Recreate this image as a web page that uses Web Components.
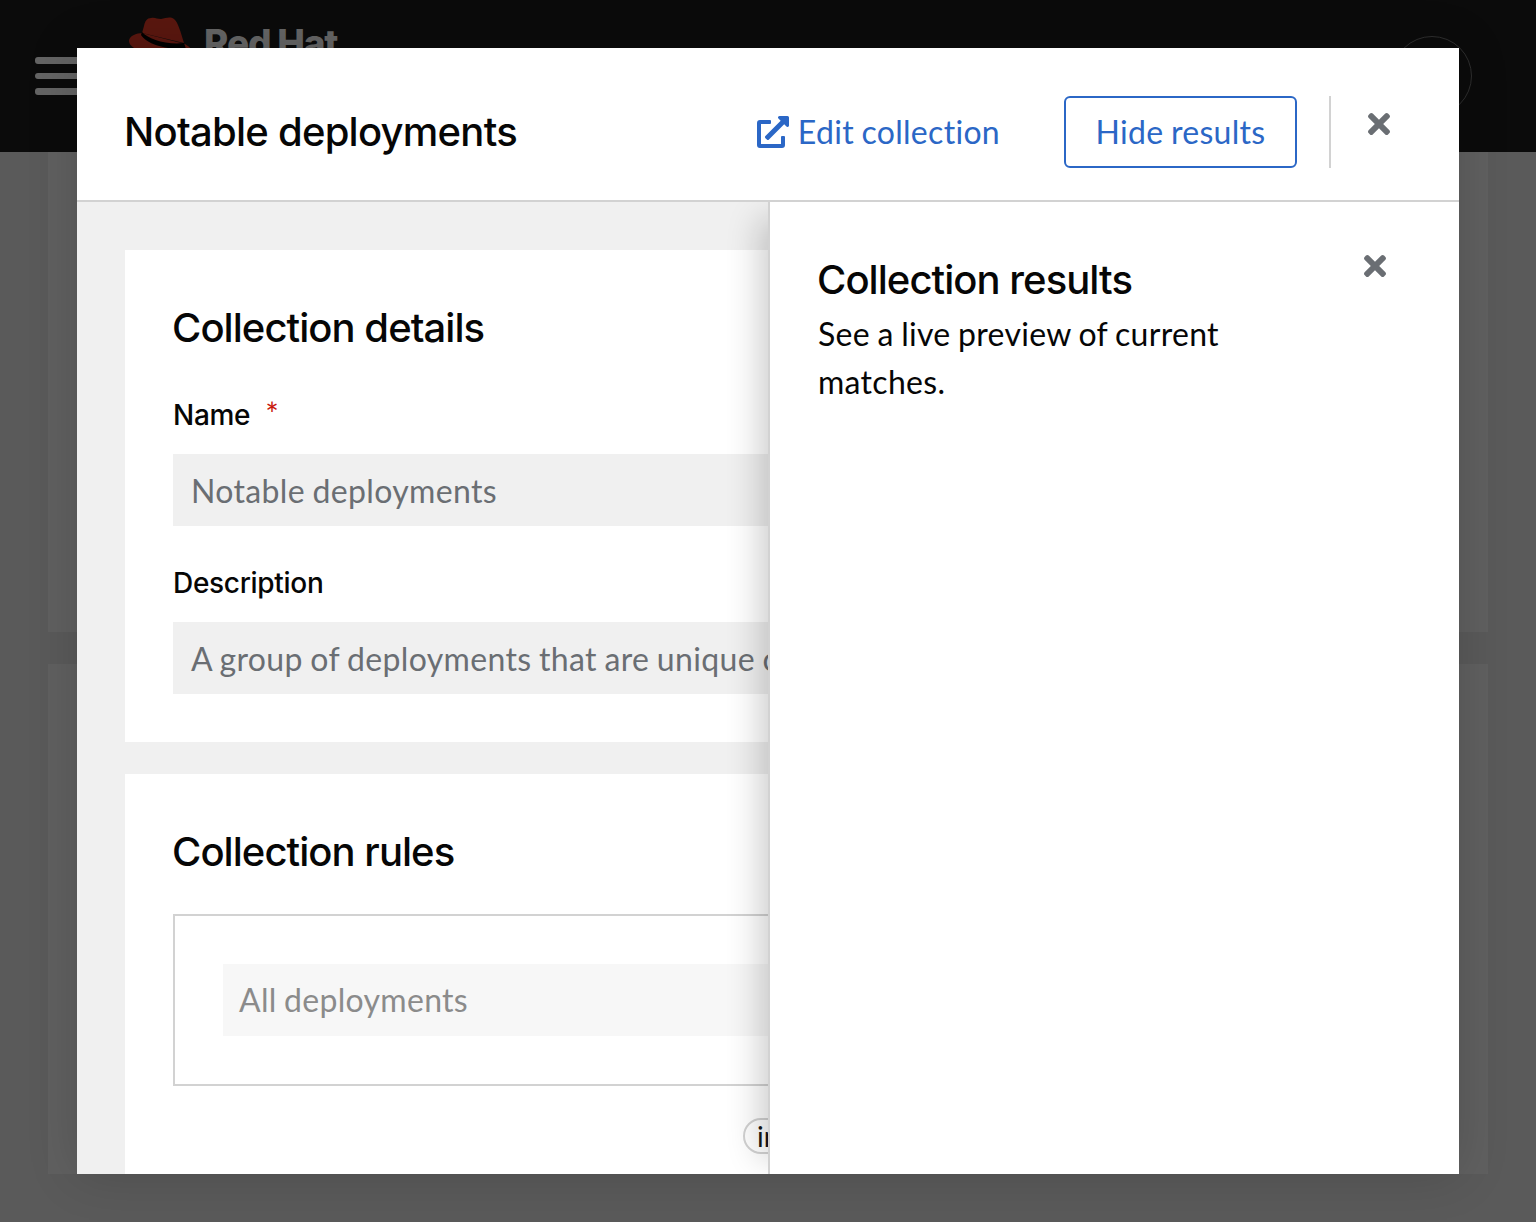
<!DOCTYPE html>
<html lang="en">
<head>
<meta charset="utf-8">
<title>Notable deployments</title>
<style>
  html, body { margin: 0; height: 100%; }
  body { font-family: "Lato", "Liberation Sans", sans-serif; overflow: hidden; }
</style>
</head>
<body>
<app-backdrop>
  <app-masthead></app-masthead>
  <page-block style="height:480px"></page-block>
  <page-block style="height:510px"></page-block>
</app-backdrop>

<collection-modal heading="Notable deployments">
  <edit-link slot="actions">Edit collection</edit-link>
  <outline-button slot="actions">Hide results</outline-button>

  <form-card heading="Collection details">
    <form-field label="Name" required value="Notable deployments"></form-field>
    <form-field label="Description" value="A group of deployments that are unique or notable"></form-field>
  </form-card>
  <form-card heading="Collection rules">
    <rule-box>All deployments</rule-box>
    <rule-pill>in</rule-pill>
  </form-card>

  <results-drawer slot="drawer" heading="Collection results">See a live preview of current matches.</results-drawer>
</collection-modal>

<script>
const closeIcon = `<svg viewBox="0 0 352 512" width="22" height="32" fill="currentColor" aria-hidden="true"><path d="M242.72 256l100.07-100.07c12.28-12.28 12.28-32.19 0-44.48l-22.24-22.24c-12.28-12.28-32.19-12.28-44.48 0L176 189.28 75.93 89.21c-12.28-12.28-32.19-12.28-44.48 0L9.21 111.45c-12.28 12.28-12.28 32.19 0 44.48L109.28 256 9.21 356.07c-12.28 12.28-12.28 32.19 0 44.48l22.24 22.24c12.28 12.28 32.2 12.28 44.48 0L176 322.72l100.07 100.07c12.28 12.28 32.2 12.28 44.48 0l22.24-22.24c12.28-12.28 12.28-32.19 0-44.48L242.72 256z"/></svg>`;

// shared text settings, Lato needs a nudge to get the same widths
const bodyText = `font: 400 32px/48px "Lato", sans-serif; letter-spacing: .3px; word-spacing: -1px;`;
const headText = `font: 500 40px/52px "Inter", sans-serif; letter-spacing: -.95px;`;

class BaseElement extends HTMLElement {
  constructor() {
    super();
    this.attachShadow({ mode: "open" });
  }
  connectedCallback() {
    this.shadowRoot.innerHTML = this.markup();
  }
}

class AppBackdrop extends BaseElement {
  markup() {
    return `
      <style>
        :host { display: block; height: 1222px; background: #5a5a5a; overflow: hidden; }
        ::slotted(page-block) { margin: 0 48px 32px; }
      </style>
      <slot></slot>`;
  }
}

class AppMasthead extends BaseElement {
  markup() {
    return `
      <style>
        :host { display: flex; align-items: flex-start; height: 152px; background: #0b0b0b; box-sizing: border-box; padding: 0 64px 0 35px; }
        .burger { display: flex; flex-direction: column; gap: 9px; width: 50px; margin-top: 57px; }
        .burger i { display: block; height: 6.5px; border-radius: 3px; background: #646464; }
        .brand { display: flex; gap: 8px; margin: 14px 0 0 43px; }
        .brand svg { display: block; }
        .name { font: 800 37px/1 "Inter", "Liberation Sans", sans-serif; letter-spacing: -1.2px; color: #656565; margin-top: 10px; }
        .avatar { width: 80px; height: 80px; box-sizing: border-box; border: 1px solid #2e2e2e; border-radius: 50%; margin: 36px 0 0 auto; }
      </style>
      <div class="burger"><i></i><i></i><i></i></div>
      <div class="brand">
        <svg width="68" height="44" viewBox="0 0 68 44" aria-hidden="true">
          <path fill="#5a170f" d="M15 19C8 19 1 22 1 27c0 7 16 15 38 15 10 0 24 0 27-1 1-3-4-8-9-11L14 19z"/>
          <path fill="#5a170f" d="M16 12c1-5 3-8 7-8 4-1 6 1 10 1 5-1 9-3 13 0 4 3 7 14 10 24L14 19z"/>
          <path fill="#000" d="M14 18c6 7 24 13 42 11l2 6C38 36 19 30 13 21z"/>
        </svg>
        <div class="name">Red Hat</div>
      </div>
      <div class="avatar"></div>`;
  }
}

class PageBlock extends BaseElement {
  markup() {
    return `<style>:host { display: block; background: #606060; }</style>`;
  }
}

class CollectionModal extends BaseElement {
  markup() {
    return `
      <style>
        :host { position: absolute; left: 77px; top: 48px; width: 1382px; height: 1126px; display: flex; flex-direction: column; background: #fff; box-shadow: 0 0 48px rgba(3,3,3,.16); color: #060606; }
        header { display: flex; align-items: center; flex: none; padding: 48px 44px 32px 48px; border-bottom: 2px solid #d2d2d2; }
        h1 { ${headText} letter-spacing: -.75px; margin: 0 auto 0 -1px; }
        .sep { width: 2px; height: 72px; background: #d2d2d2; margin: 0 12px 0 32px; }
        .close { display: flex; align-items: center; justify-content: center; align-self: flex-start; width: 72px; height: 56px; padding: 0; border: 0; background: none; color: #6a6e73; }
        .body { position: relative; flex: 1; min-height: 0; overflow: hidden; background: #f0f0f0; }
        .content { display: flex; flex-direction: column; gap: 32px; padding: 48px; }
      </style>
      <header>
        <h1>${this.getAttribute("heading")}</h1>
        <slot name="actions"></slot>
        <div class="sep"></div>
        <button class="close" aria-label="Close">${closeIcon}</button>
      </header>
      <div class="body">
        <div class="content"><slot></slot></div>
        <slot name="drawer"></slot>
      </div>`;
  }
}

class EditLink extends BaseElement {
  markup() {
    return `
      <style>
        :host { display: inline-flex; align-items: center; gap: 9px; color: #2b67c6; ${bodyText} margin-right: 64px; }
        svg { display: block; }
      </style>
      <svg viewBox="0 0 512 512" width="32" height="32" fill="currentColor" aria-hidden="true"><path d="M432,320H400a16,16,0,0,0-16,16V448H64V128H208a16,16,0,0,0,16-16V80a16,16,0,0,0-16-16H48A48,48,0,0,0,0,112V464a48,48,0,0,0,48,48H400a48,48,0,0,0,48-48V336A16,16,0,0,0,432,320ZM488,0h-128c-21.37,0-32.05,25.91-17,41l35.73,35.73L135,320.37a24,24,0,0,0,0,34L157.67,377a24,24,0,0,0,34,0L435.28,133.32,471,169c15,15,41,4.5,41-17V24A24,24,0,0,0,488,0Z"/></svg>
      <span><slot></slot></span>`;
  }
}

class OutlineButton extends BaseElement {
  markup() {
    return `
      <style>
        :host { display: inline-flex; align-items: center; justify-content: center; box-sizing: border-box; width: 233px; height: 72px; border: 2px solid #2b67c6; border-radius: 6px; color: #2b67c6; ${bodyText} }
      </style>
      <slot></slot>`;
  }
}

class FormCard extends BaseElement {
  markup() {
    return `
      <style>
        :host { display: block; background: #fff; padding: 48px; }
        h2 { ${headText} margin: 4px 0 41px -1px; }
        .stack { display: flex; flex-direction: column; gap: 37px; }
      </style>
      <h2>${this.getAttribute("heading")}</h2>
      <div class="stack"><slot></slot></div>`;
  }
}

class FormField extends BaseElement {
  markup() {
    const star = this.hasAttribute("required") ? `<span class="req">*</span>` : "";
    return `
      <style>
        :host { display: block; }
        label { display: block; font: 500 28px/40px "Inter", sans-serif; letter-spacing: -.3px; color: #060606; margin-bottom: 19px; }
        .req { color: #c9190b; margin-left: 15px; font: 400 32px/1 "Lato", sans-serif; vertical-align: -1px; }
        .input { height: 72px; box-sizing: border-box; padding: 0 18px; background: #f0f0f0; color: #6a6e73; ${bodyText} letter-spacing: .35px; line-height: 74px; white-space: nowrap; overflow: hidden; }
      </style>
      <label>${this.getAttribute("label")}${star}</label>
      <div class="input">${this.getAttribute("value")}</div>`;
  }
}

class RuleBox extends BaseElement {
  markup() {
    return `
      <style>
        :host { display: block; border: 2px solid #d2d2d2; padding: 48px; margin-top: -5px; }
        .value { height: 72px; padding: 0 16px; background: #f7f7f7; color: #8b8b8b; ${bodyText} line-height: 72px; }
      </style>
      <div class="value"><slot></slot></div>`;
  }
}

class RulePill extends BaseElement {
  markup() {
    return `
      <style>
        :host { display: block; align-self: center; box-sizing: border-box; width: 50px; height: 36px; margin-top: -5px; padding-left: 12px; border: 2px solid #d2d2d2; border-radius: 18px; font: 400 28px/32px "Lato", sans-serif; color: #151515; }
      </style>
      <slot></slot>`;
  }
}

class ResultsDrawer extends BaseElement {
  markup() {
    return `
      <style>
        :host { position: absolute; top: 0; right: 0; bottom: 0; width: 691px; box-sizing: border-box; display: flex; align-items: flex-start; padding: 48px; background: #fff; border-left: 2px solid #d2d2d2; box-shadow: -24px 0 32px -16px rgba(3,3,3,.2); }
        .text { flex: 1; max-width: 480px; }
        h2 { ${headText} margin: 4px 0 0 -1px; }
        p { ${bodyText} margin: 4px 0 0; color: #060606; }
        .close { display: flex; align-items: center; justify-content: center; width: 72px; height: 72px; margin-left: auto; padding: 0; border: 0; background: none; color: #6a6e73; margin-top: -20px; }
      </style>
      <div class="text">
        <h2>${this.getAttribute("heading")}</h2>
        <p><slot></slot></p>
      </div>
      <button class="close" aria-label="Close">${closeIcon}</button>`;
  }
}

customElements.define("app-backdrop", AppBackdrop);
customElements.define("app-masthead", AppMasthead);
customElements.define("page-block", PageBlock);
customElements.define("collection-modal", CollectionModal);
customElements.define("edit-link", EditLink);
customElements.define("outline-button", OutlineButton);
customElements.define("form-card", FormCard);
customElements.define("form-field", FormField);
customElements.define("rule-box", RuleBox);
customElements.define("rule-pill", RulePill);
customElements.define("results-drawer", ResultsDrawer);
</script>
</body>
</html>
